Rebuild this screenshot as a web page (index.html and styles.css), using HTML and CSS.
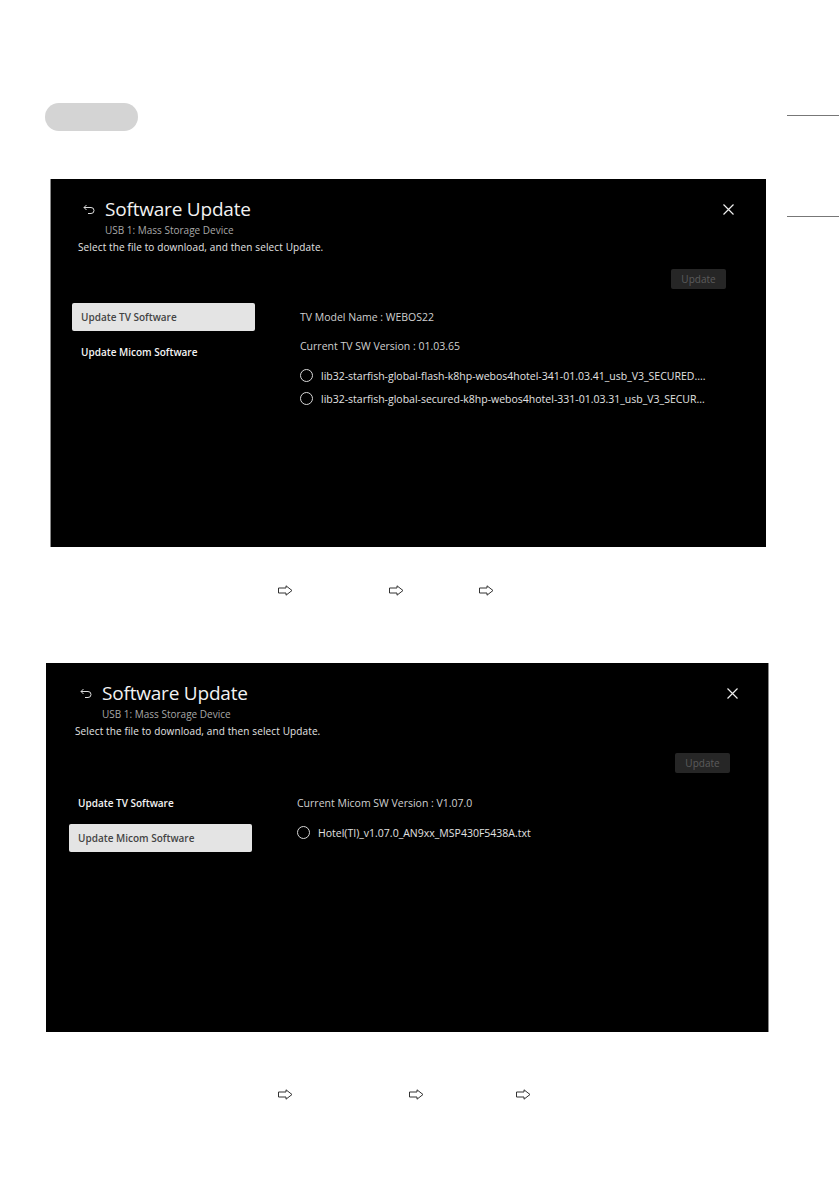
FILE: index.html
```html
<html>
    <head>
        <title>Software Update</title>
        <link rel="stylesheet" href="styles.css">
    </head>

    <body>
        <div class="page">
            <div class="main">
                <div class="pill"></div>

                <!-- screen 1: TV software -->
                <div class="screen screen-tv">
                    <div class="head">
                        <svg class="back" width="12" height="11" viewBox="0 0 12 11">
                            <path d="M3.5 1 L1 3.5 L3.5 6 M1 3.5 H8 A3 3 0 0 1 8 9.5 H5" fill="none" stroke="#ddd" stroke-width="1"/>
                        </svg>
                        <span class="title">Software Update</span>
                        <svg class="close" width="11" height="11" viewBox="0 0 11 11">
                            <path d="M0.5 0.5 L10.5 10.5 M10.5 0.5 L0.5 10.5" stroke="#eee" stroke-width="1.2"/>
                        </svg>
                    </div>
                    <p class="device">USB 1: Mass Storage Device</p>
                    <p class="hint">Select the file to download, and then select Update.</p>
                    <div class="actions">
                        <span class="update-btn">Update</span>
                    </div>
                    <div class="body">
                        <ul class="menu">
                            <li class="selected">Update TV Software</li>
                            <li>Update Micom Software</li>
                        </ul>
                        <div class="detail">
                            <p class="info">TV Model Name : WEBOS22</p>
                            <p class="info">Current TV SW Version : 01.03.65</p>
                            <div class="file"><span class="radio"></span>lib32-starfish-global-flash-k8hp-webos4hotel-341-01.03.41_usb_V3_SECURED....</div>
                            <div class="file"><span class="radio"></span>lib32-starfish-global-secured-k8hp-webos4hotel-331-01.03.31_usb_V3_SECUR...</div>
                        </div>
                    </div>
                </div>

                <div class="steps steps-one">
                    <svg class="arrow" width="15" height="11" viewBox="0 0 15 11"><path d="M0.5 3 H8 V0.8 L14 5.5 L8 10.2 V8 H0.5 Z" fill="#fff" stroke="#333" stroke-width="1"/></svg>
                    <svg class="arrow" width="15" height="11" viewBox="0 0 15 11"><path d="M0.5 3 H8 V0.8 L14 5.5 L8 10.2 V8 H0.5 Z" fill="#fff" stroke="#333" stroke-width="1"/></svg>
                    <svg class="arrow" width="15" height="11" viewBox="0 0 15 11"><path d="M0.5 3 H8 V0.8 L14 5.5 L8 10.2 V8 H0.5 Z" fill="#fff" stroke="#333" stroke-width="1"/></svg>
                </div>

                <!-- screen 2: Micom software -->
                <div class="screen screen-micom">
                    <div class="head">
                        <svg class="back" width="12" height="11" viewBox="0 0 12 11">
                            <path d="M3.5 1 L1 3.5 L3.5 6 M1 3.5 H8 A3 3 0 0 1 8 9.5 H5" fill="none" stroke="#ddd" stroke-width="1"/>
                        </svg>
                        <span class="title">Software Update</span>
                        <svg class="close" width="11" height="11" viewBox="0 0 11 11">
                            <path d="M0.5 0.5 L10.5 10.5 M10.5 0.5 L0.5 10.5" stroke="#eee" stroke-width="1.2"/>
                        </svg>
                    </div>
                    <p class="device">USB 1: Mass Storage Device</p>
                    <p class="hint">Select the file to download, and then select Update.</p>
                    <div class="actions">
                        <span class="update-btn">Update</span>
                    </div>
                    <div class="body">
                        <ul class="menu">
                            <li>Update TV Software</li>
                            <li class="selected">Update Micom Software</li>
                        </ul>
                        <div class="detail">
                            <p class="info">Current Micom SW Version : V1.07.0</p>
                            <div class="file"><span class="radio"></span>Hotel(TI)_v1.07.0_AN9xx_MSP430F5438A.txt</div>
                        </div>
                    </div>
                </div>

                <div class="steps steps-two">
                    <svg class="arrow" width="15" height="11" viewBox="0 0 15 11"><path d="M0.5 3 H8 V0.8 L14 5.5 L8 10.2 V8 H0.5 Z" fill="#fff" stroke="#333" stroke-width="1"/></svg>
                    <svg class="arrow" width="15" height="11" viewBox="0 0 15 11"><path d="M0.5 3 H8 V0.8 L14 5.5 L8 10.2 V8 H0.5 Z" fill="#fff" stroke="#333" stroke-width="1"/></svg>
                    <svg class="arrow" width="15" height="11" viewBox="0 0 15 11"><path d="M0.5 3 H8 V0.8 L14 5.5 L8 10.2 V8 H0.5 Z" fill="#fff" stroke="#333" stroke-width="1"/></svg>
                </div>
            </div>

            <div class="side">
                <div class="mark mark-top"></div>
                <div class="mark mark-bottom"></div>
            </div>
        </div>
    </body>
</html>
```

FILE: styles.css
```css
body{
    margin: 0;
    background-color: #fff;
    font-family: "Open Sans", "Noto Sans", sans-serif;
}

p{
    margin: 0;
}

.page{
    display: grid;
    grid-template-columns: 787px 52px;
    width: 839px;
}

.main{
    padding-top: 103px;
}

.pill{
    width: 93px;
    height: 28px;
    margin-left: 45px;
    border-radius: 14px;
    background-color: #d4d4d4;
}

.side{
    display: flex;
    flex-direction: column;
}

.mark{
    height: 1px;
    background-color: #777;
}

.mark-top{
    margin-top: 115px;
}

.mark-bottom{
    margin-top: 100px;
}

/* tv screens */

.screen{
    box-sizing: border-box;
    background-color: #000;
    color: #eee;
    padding-top: 18px;
}

.screen-tv{
    width: 716px;
    height: 368px;
    margin-top: 48px;
    margin-left: 50px;
    padding-left: 27px;
    padding-right: 40px;
    border-left: 1px solid #8a8a8a;
}

.screen-micom{
    width: 723px;
    height: 369px;
    margin-top: 67px;
    margin-left: 46px;
    padding-left: 29px;
    padding-right: 38px;
    border-right: 1px solid #8a8a8a;
}

.screen-micom .body{
    margin-top: 16px;
}

.head{
    display: flex;
    align-items: center;
    height: 24px;
    padding-left: 5px;
}

.back{
    margin-right: 10px;
}

.title{
    font-size: 19px;
    color: #f2f2f2;
    letter-spacing: -0.2px;
}

.close{
    margin-left: auto;
    margin-right: -8px;
}

.device{
    margin-top: 2px;
    padding-left: 27px;
    font-size: 10px;
    line-height: 14px;
    color: #a8a8a8;
}

.hint{
    margin-top: 3px;
    font-size: 10px;
    line-height: 14px;
    letter-spacing: 0.12px;
    color: #e4e4e4;
}

.actions{
    display: flex;
    justify-content: flex-end;
    margin-top: 15px;
}

.update-btn{
    width: 55px;
    height: 20px;
    line-height: 20px;
    text-align: center;
    border-radius: 2px;
    background-color: #262626;
    color: #5c5c5c;
    font-size: 10px;
}

.body{
    display: flex;
    margin-top: 14px;
}

.menu{
    list-style: none;
    margin: 0 0 0 -6px;
    padding: 0;
    width: 183px;
    display: flex;
    flex-direction: column;
    gap: 7px;
}

.menu li{
    height: 28px;
    line-height: 28px;
    padding-left: 9px;
    font-size: 10px;
    font-weight: 600;
    color: #f4f4f4;
    border-radius: 2px;
}

.menu li.selected{
    background-color: #e4e4e4;
    color: #444;
}

.detail{
    margin-left: 45px;
    display: flex;
    flex-direction: column;
}

.info{
    height: 29px;
    line-height: 28px;
    font-size: 10.5px;
    color: #d0d0d0;
}

.file{
    display: flex;
    align-items: center;
    height: 23px;
    font-size: 10.5px;
    color: #e2e2e2;
    white-space: nowrap;
}

.info + .file{
    margin-top: 3px;
}

.radio{
    box-sizing: border-box;
    width: 13px;
    height: 13px;
    margin-right: 8px;
    border: 1px solid #d8d8d8;
    border-radius: 50%;
    flex-shrink: 0;
}

/* arrows between the screens */

.steps{
    display: flex;
    align-items: center;
    height: 11px;
}

.steps-one{
    margin-top: 38px;
    padding-left: 278px;
    gap: 96px;
}

.steps-one .arrow:last-child{
    margin-left: -21px;
}

.steps-two{
    margin-top: 57px;
    padding-left: 278px;
    gap: 116px;
}

.steps-two .arrow:last-child{
    margin-left: -24px;
}
```
